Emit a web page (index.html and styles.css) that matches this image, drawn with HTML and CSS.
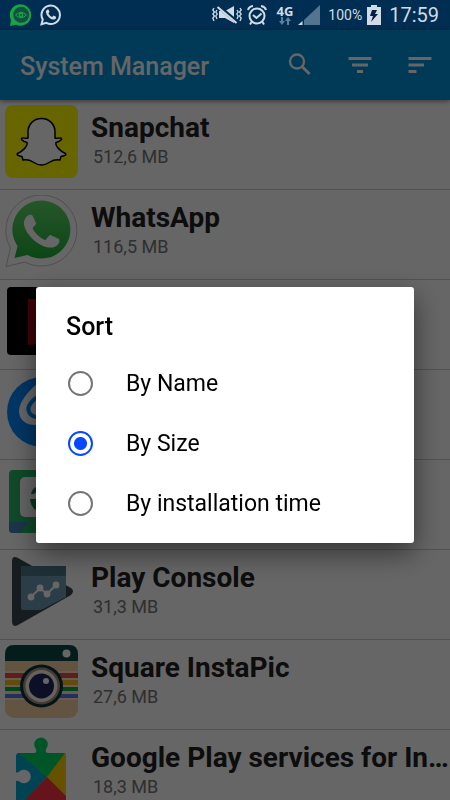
FILE: index.html
```
<!DOCTYPE html>
<html lang="en">

<head>
    <meta charset="UTF-8">
    <meta name="viewport" content="width=device-width, initial-scale=1.0">
    <title>System Manager</title>
    <link rel="stylesheet" href="styles.css">
</head>

<body>
    <div class="app">
        <!-- Status bar -->
        <div class="status-bar">
            <div class="status-left">
                <svg width="22" height="22" viewBox="0 0 22 22">
                    <path d="M0 22 L1 16 A10.7 10.7 0 1 1 6 20.7 Z" fill="#18a347"/>
                    <circle cx="11.2" cy="10.8" r="8" fill="#12513f"/>
                    <path d="M5.500 11 Q11 5.500 16.500 11 Q11 16.500 5.500 11 Z" fill="none" stroke="#18a347" stroke-width="1"/>
                    <circle cx="11" cy="11" r="2.400" fill="#18a347"/>
                    <circle cx="11" cy="11" r="1" fill="#12513f"/>
                </svg>
                <svg width="22" height="22" viewBox="0 0 22 22">
                    <path d="M1.500 20.300 L2.800 15.500 A9.200 9.200 0 1 1 6.300 18.900 Z" fill="none" stroke="#d2dbe5" stroke-width="2"/>
                    <path d="M7.500 5.500 Q6 6 5.800 8 Q6.200 11.500 9.500 14 Q12.500 16.300 15 15.200 Q16.500 14.500 16 12.700 L13.500 11.500 L12.200 13 Q9.500 12 8.400 9.300 L9.500 8 L8.500 5.500 Z" fill="#d2dbe5"/>
                </svg>
            </div>
            <div class="status-right">
                <svg width="30" height="20" viewBox="0 0 30 20">
                    <g fill="none" stroke="#d2dbe5" stroke-width="1.300">
                        <path d="M2 3 L.8 5 L2.500 7 L.8 9 L2.500 11 L.8 13 L2 16"/>
                        <path d="M5 5 L3.800 7 L5.200 9 L3.800 11 L5 14"/>
                        <path d="M28 3 L29.200 5 L27.500 7 L29.200 9 L27.500 11 L29.200 13 L28 16"/>
                        <path d="M25 5 L26.200 7 L24.800 9 L26.200 11 L25 14"/>
                    </g>
                    <path d="M7 6 H13 L22 1 V18 L13 13 H7 Z" fill="#d2dbe5"/>
                    <path d="M6 1 L25 17" stroke="#002e52" stroke-width="4"/>
                    <path d="M5.500 2 L24.500 18" stroke="#d2dbe5" stroke-width="2"/>
                </svg>
                <svg width="20" height="22" viewBox="0 0 20 22">
                    <g fill="none" stroke="#d2dbe5" stroke-width="2">
                        <circle cx="10" cy="12" r="7.500"/>
                        <path d="M1 6 Q2 2.500 6 2 M19 6 Q18 2.500 14 2"/>
                        <path d="M6 11 L9.500 14 L14.500 9.500"/>
                        <path d="M4.500 18 L3 20.500 M15.500 18 L17 20.500"/>
                    </g>
                </svg>
                <div class="network">
                    <span>4G</span>
                    <svg width="12" height="8" viewBox="0 0 12 8">
                        <path d="M2 0 H4 V4 H6 L3 8 L0 4 H2 Z M8 8 H10 V4 H12 L9 0 L6 4 H8 Z" fill="#5f809b"/>
                    </svg>
                </div>
                <svg width="22" height="20" viewBox="0 0 22 20">
                    <path d="M22 0 V20 H6 V15 Z" fill="#557490"/>
                    <path d="M4.500 16 V20 H0 Z" fill="#d2dbe5"/>
                </svg>
                <span class="percent">100%</span>
                <svg width="14" height="20" viewBox="0 0 14 20">
                    <path d="M4 0 H10 V2 H14 V20 H0 V2 H4 Z" fill="#d2dbe5"/>
                    <path d="M5 5 H10 L8 9 H11 L4 17 L6 11 H3 Z" fill="#002040"/>
                </svg>
                <span class="clock">17:59</span>
            </div>
        </div>

        <!-- Toolbar -->
        <header class="toolbar">
            <h1>System Manager</h1>
            <button type="button" class="icon-button" aria-label="Search">
                <svg width="24" height="24" viewBox="0 0 24 24" fill="none" stroke="#fff" stroke-width="2.300">
                    <circle cx="9" cy="9.500" r="7"/>
                    <path d="M14 14.500 L21.500 22" stroke-width="3"/>
                </svg>
            </button>
            <button type="button" class="icon-button" aria-label="Filter">
                <svg width="24" height="24" viewBox="0 0 24 24">
                    <path d="M.5 5 H23.500 V8 H.5 Z M4 11.500 H20 V14.500 H4 Z M9 18 H15 V21 H9 Z" fill="#fff"/>
                </svg>
            </button>
            <button type="button" class="icon-button" aria-label="Sort">
                <svg width="24" height="24" viewBox="0 0 24 24">
                    <path d="M.5 5 H23.500 V8 H.5 Z M.5 11.500 H16 V14.500 H.5 Z M.5 18 H8.500 V21 H.5 Z" fill="#fff"/>
                </svg>
            </button>
        </header>

        <!-- App list -->
        <ul class="app-list">
            <li class="app-row">
                <svg class="app-icon" viewBox="0 0 73 73">
                    <rect width="73" height="73" rx="8" fill="#fffc00"/>
                    <path d="M36.500 13.500 C45 13.500 50 20 50 27 V33 C52 34 54 32.500 56 33 C57.500 34 56 36 51 37.500 C50 41 55 46 60.500 48.500 C62 50 59 51 56 51.500 L55 55 C51 54.500 48 55 45 57 C42 59 39 60 36.500 60 C34 60 31 59 28 57 C25 55 22 54.500 18 55 L17 51.500 C14 51 11 50 12.500 48.500 C18 46 23 41 22 37.500 C17 36 15.500 34 17 33 C19 32.500 21 34 23 33 V27 C23 20 28 13.500 36.500 13.500 Z" fill="#fff" stroke="#000" stroke-width="1.500" stroke-linejoin="round"/>
                </svg>
                <div class="app-info">
                    <h2>Snapchat</h2>
                    <p>512,6 MB</p>
                </div>
            </li>
            <li class="app-row">
                <svg class="app-icon" viewBox="0 0 73 73">
                    <defs>
                        <linearGradient id="waGreen" x1="0" y1="0" x2="0" y2="1">
                            <stop offset="0" stop-color="#60d669"/>
                            <stop offset="1" stop-color="#20b038"/>
                        </linearGradient>
                    </defs>
                    <path d="M1 71.500 L5.500 53 A35.500 35.500 0 1 1 20 67 Z" fill="#fff" stroke="#c4c4c4" stroke-width="1"/>
                    <path d="M9.500 63 L12.500 51 A29 29 0 1 1 22.500 60 Z" fill="url(#waGreen)"/>
                    <path d="M24 20 C20 22 18.500 26 19 29.500 C20 37 28 46 36 50 C44 54 50 53 53 49.500 C55 47 54.500 45 54 44 L45.500 40 C44 40 42 43.500 40.500 45 C36 44 29 37.500 27.500 33 C29 31 31.500 29.500 31 28 L27.500 20.500 C26.500 19.500 25 19.500 24 20 Z" fill="#fff"/>
                </svg>
                <div class="app-info">
                    <h2>WhatsApp</h2>
                    <p>116,5 MB</p>
                </div>
            </li>
            <li class="app-row">
                <svg class="app-icon" viewBox="0 0 73 73">
                    <rect x="2" y="2" width="69" height="68" rx="4" fill="#000"/>
                    <path d="M23 14 H34 L50 59 H40 Z" fill="#e50914"/>
                    <path d="M23 14 H32 V59 L23 60 Z M41 14 H50 V60 L41 59 Z" fill="#9e0710"/>
                </svg>
            </li>
            <li class="app-row">
                <svg class="app-icon" viewBox="0 0 73 73">
                    <circle cx="37" cy="37" r="35" fill="#0088ff"/>
                    <path d="M37 6 C29 10 20 20 16 28 C11 39 16 50 30 50 H40 Z" fill="#fff"/>
                    <path d="M36 20 C30 23 26 27 24 31 C22 36 25 41 31 42 H38" fill="none" stroke="#0088ff" stroke-width="4"/>
                </svg>
            </li>
            <li class="app-row">
                <svg class="app-icon" viewBox="0 0 73 73">
                    <rect x="4" y="5" width="65" height="63" rx="4" fill="#28b868"/>
                    <path d="M4 57 H23 L15 68 H8 Q4 68 4 64 Z" fill="#4285b8"/>
                    <rect x="15" y="12" width="43" height="40" rx="5" fill="#fff"/>
                    <path d="M26 29 Q27 23 33 21 V27 Q30 27 29 29 Z M25 34 H40 V48 Q26 47 25 34 Z" fill="#188a4c"/>
                </svg>
            </li>
            <li class="app-row">
                <svg class="app-icon" viewBox="0 0 73 73">
                    <path d="M7 6 Q7 0 13 3 L66 33 Q70 36 66 40 L13 70 Q7 73 7 66 Z" fill="#37474f"/>
                    <path d="M16 11 H61 V42 L36 55 H18 Q16 55 16 53 Z" fill="#6d9cb2"/>
                    <path d="M16 11 H61 V21 H16 Z" fill="#4d7688"/>
                    <path d="M26 42 L35 33 L42 39 L51 30" fill="none" stroke="#fff" stroke-width="2"/>
                    <g fill="#fff">
                        <circle cx="26" cy="42" r="3.400"/>
                        <circle cx="35" cy="33" r="3.400"/>
                        <circle cx="42" cy="39" r="3.400"/>
                        <circle cx="51" cy="30" r="3.400"/>
                    </g>
                </svg>
                <div class="app-info">
                    <h2>Play Console</h2>
                    <p>31,3 MB</p>
                </div>
            </li>
            <li class="app-row">
                <svg class="app-icon" viewBox="0 0 73 73">
                    <rect width="73" height="73" rx="9" fill="#f8d0a4"/>
                    <path d="M0 16 V9 Q0 0 9 0 H64 Q73 0 73 9 V16 Z" fill="#0c4648"/>
                    <circle cx="61.500" cy="8.500" r="4" fill="#fff"/>
                    <rect y="26" width="73" height="29" fill="#ffe6cc"/>
                    <rect y="28" width="73" height="5" fill="#f04a4a"/>
                    <rect y="35" width="73" height="5" fill="#f2bd1d"/>
                    <rect y="42" width="73" height="4" fill="#09ab40"/>
                    <rect y="49" width="73" height="4" fill="#5c77e8"/>
                    <circle cx="36.500" cy="41" r="21.500" fill="#08343a"/>
                    <circle cx="36.500" cy="41" r="18.500" fill="#a99680"/>
                    <circle cx="36.500" cy="41" r="16" fill="#fff4e8"/>
                    <circle cx="36.500" cy="41" r="12.500" fill="#202660"/>
                    <circle cx="41" cy="36" r="3" fill="#fff"/>
                </svg>
                <div class="app-info">
                    <h2>Square InstaPic</h2>
                    <p>27,6 MB</p>
                </div>
            </li>
            <li class="app-row">
                <svg class="app-icon" viewBox="0 0 73 73">
                    <path d="M13 18 H29.500 Q32 18 31 14 A6.800 6.800 0 1 1 41 14 Q40 18 43 18 H59 L42 42 Z" fill="#00d563"/>
                    <path d="M59 18 Q61 18 61 21 V65 L41 42 Z" fill="#ffca00"/>
                    <path d="M14 18 L42 42 L18 68 H13 Q11 68 11 65 V46 Q13 45 15 47 A6.800 6.800 0 1 0 15 36 Q12 39 11 37 V21 Q11 18 14 18 Z" fill="#00a7ce"/>
                    <path d="M42 42 L61 61 V66 Q61 68 59 68 H17 Z" fill="#ff3445"/>
                    <path d="M17 18 H60 L42 42 Z" fill="#00d563"/>
                </svg>
                <div class="app-info">
                    <h2>Google Play services for In…</h2>
                    <p>18,3 MB</p>
                </div>
            </li>
        </ul>
    </div>

    <!-- Sort dialog -->
    <div class="overlay">
        <form class="dialog" role="dialog" aria-labelledby="sortTitle">
            <h2 id="sortTitle">Sort</h2>
            <label class="option">
                <input type="radio" name="sort" value="name">
                <span>By Name</span>
            </label>
            <label class="option">
                <input type="radio" name="sort" value="size" checked>
                <span>By Size</span>
            </label>
            <label class="option">
                <input type="radio" name="sort" value="time">
                <span>By installation time</span>
            </label>
        </form>
    </div>
</body>

</html>
```

FILE: styles.css
```
:root {
    --status-bg: #002e52;
    --status-text: #d2dbe5;
    --toolbar-bg: #0091da;
    --accent: #0448ff;
    --status-height: 30px;
}

* {
    box-sizing: border-box;
}

body {
    margin: 0;
    font-family: Roboto, "Noto Sans", sans-serif;
    background: #fff;
    color: #212121;
}

h1, h2, p, ul {
    margin: 0;
    padding: 0;
}

svg {
    display: block;
    flex-shrink: 0;
}

.app {
    display: flex;
    flex-direction: column;
    height: 100vh;
    overflow: hidden;
}

/* Status bar */
.status-bar {
    display: flex;
    flex-shrink: 0;
    justify-content: space-between;
    align-items: center;
    height: var(--status-height);
    padding: 0 11px 0 10px;
    background: var(--status-bg);
    color: var(--status-text);
}

.status-left,
.status-right {
    display: flex;
    align-items: center;
}

.status-left {
    gap: 8px;
}

.status-right {
    gap: 5px;
}

.network {
    display: flex;
    flex-direction: column;
    align-items: center;
    margin-left: 4px;
    font: bold 13px/12px "Open Sans", sans-serif;
}

.percent {
    margin-left: 3px;
    font-size: 14px;
}

.clock {
    margin-left: 3px;
    font-size: 20px;
}

/* Toolbar */
.toolbar {
    display: flex;
    flex-shrink: 0;
    align-items: center;
    height: 70px;
    padding: 2px 0 0 20px;
    background: var(--toolbar-bg);
    color: #fff;
    box-shadow: 0 1px 5px rgba(0, 0, 0, 0.5);
    z-index: 1;
}

.toolbar h1 {
    flex: 1;
    font-size: 25px;
    font-weight: 500;
}

.icon-button {
    display: flex;
    justify-content: center;
    align-items: center;
    width: 60px;
    height: 60px;
    padding: 0 0 4px;
    border: none;
    background: none;
    cursor: pointer;
}

/* App list */
.app-list {
    flex: 1;
    overflow: hidden;
    list-style: none;
}

.app-row {
    display: flex;
    gap: 13px;
    height: 90px;
    padding: 5px 0 5px 5px;
    border-bottom: 1px solid #ccc;
}

.app-icon {
    width: 73px;
    height: 73px;
}

.app-info {
    flex: 1;
    min-width: 0;
    padding-top: 7px;
}

.app-info h2 {
    overflow: hidden;
    font-size: 28px;
    font-weight: bold;
    line-height: 32px;
    white-space: nowrap;
    text-overflow: ellipsis;
}

.app-info p {
    padding-left: 2px;
    color: #757575;
    font-size: 18px;
    line-height: 26px;
}

/* Dialog */
.overlay {
    display: flex;
    position: fixed;
    inset: var(--status-height) 0 0;
    justify-content: center;
    align-items: center;
    padding: 0 36px;
    background: rgba(0, 0, 0, 0.6);
    z-index: 2;
}

.dialog {
    width: 100%;
    padding: 24px 30px 10px;
    border-radius: 3px;
    background: #fff;
    color: #000;
    box-shadow: 0 10px 28px rgba(0, 0, 0, 0.5);
}

.dialog h2 {
    padding-bottom: 10px;
    font-size: 25px;
    font-weight: 500;
    line-height: 32px;
}

.option {
    display: flex;
    align-items: center;
    gap: 33px;
    height: 60px;
    padding-left: 2px;
    font-size: 23px;
    cursor: pointer;
}

.option input {
    appearance: none;
    width: 25px;
    height: 25px;
    margin: 0;
    border: 2px solid #757575;
    border-radius: 50%;
    cursor: pointer;
}

.option input:checked {
    border-color: var(--accent);
    background: radial-gradient(circle, var(--accent) 6px, transparent 7px);
}
```
